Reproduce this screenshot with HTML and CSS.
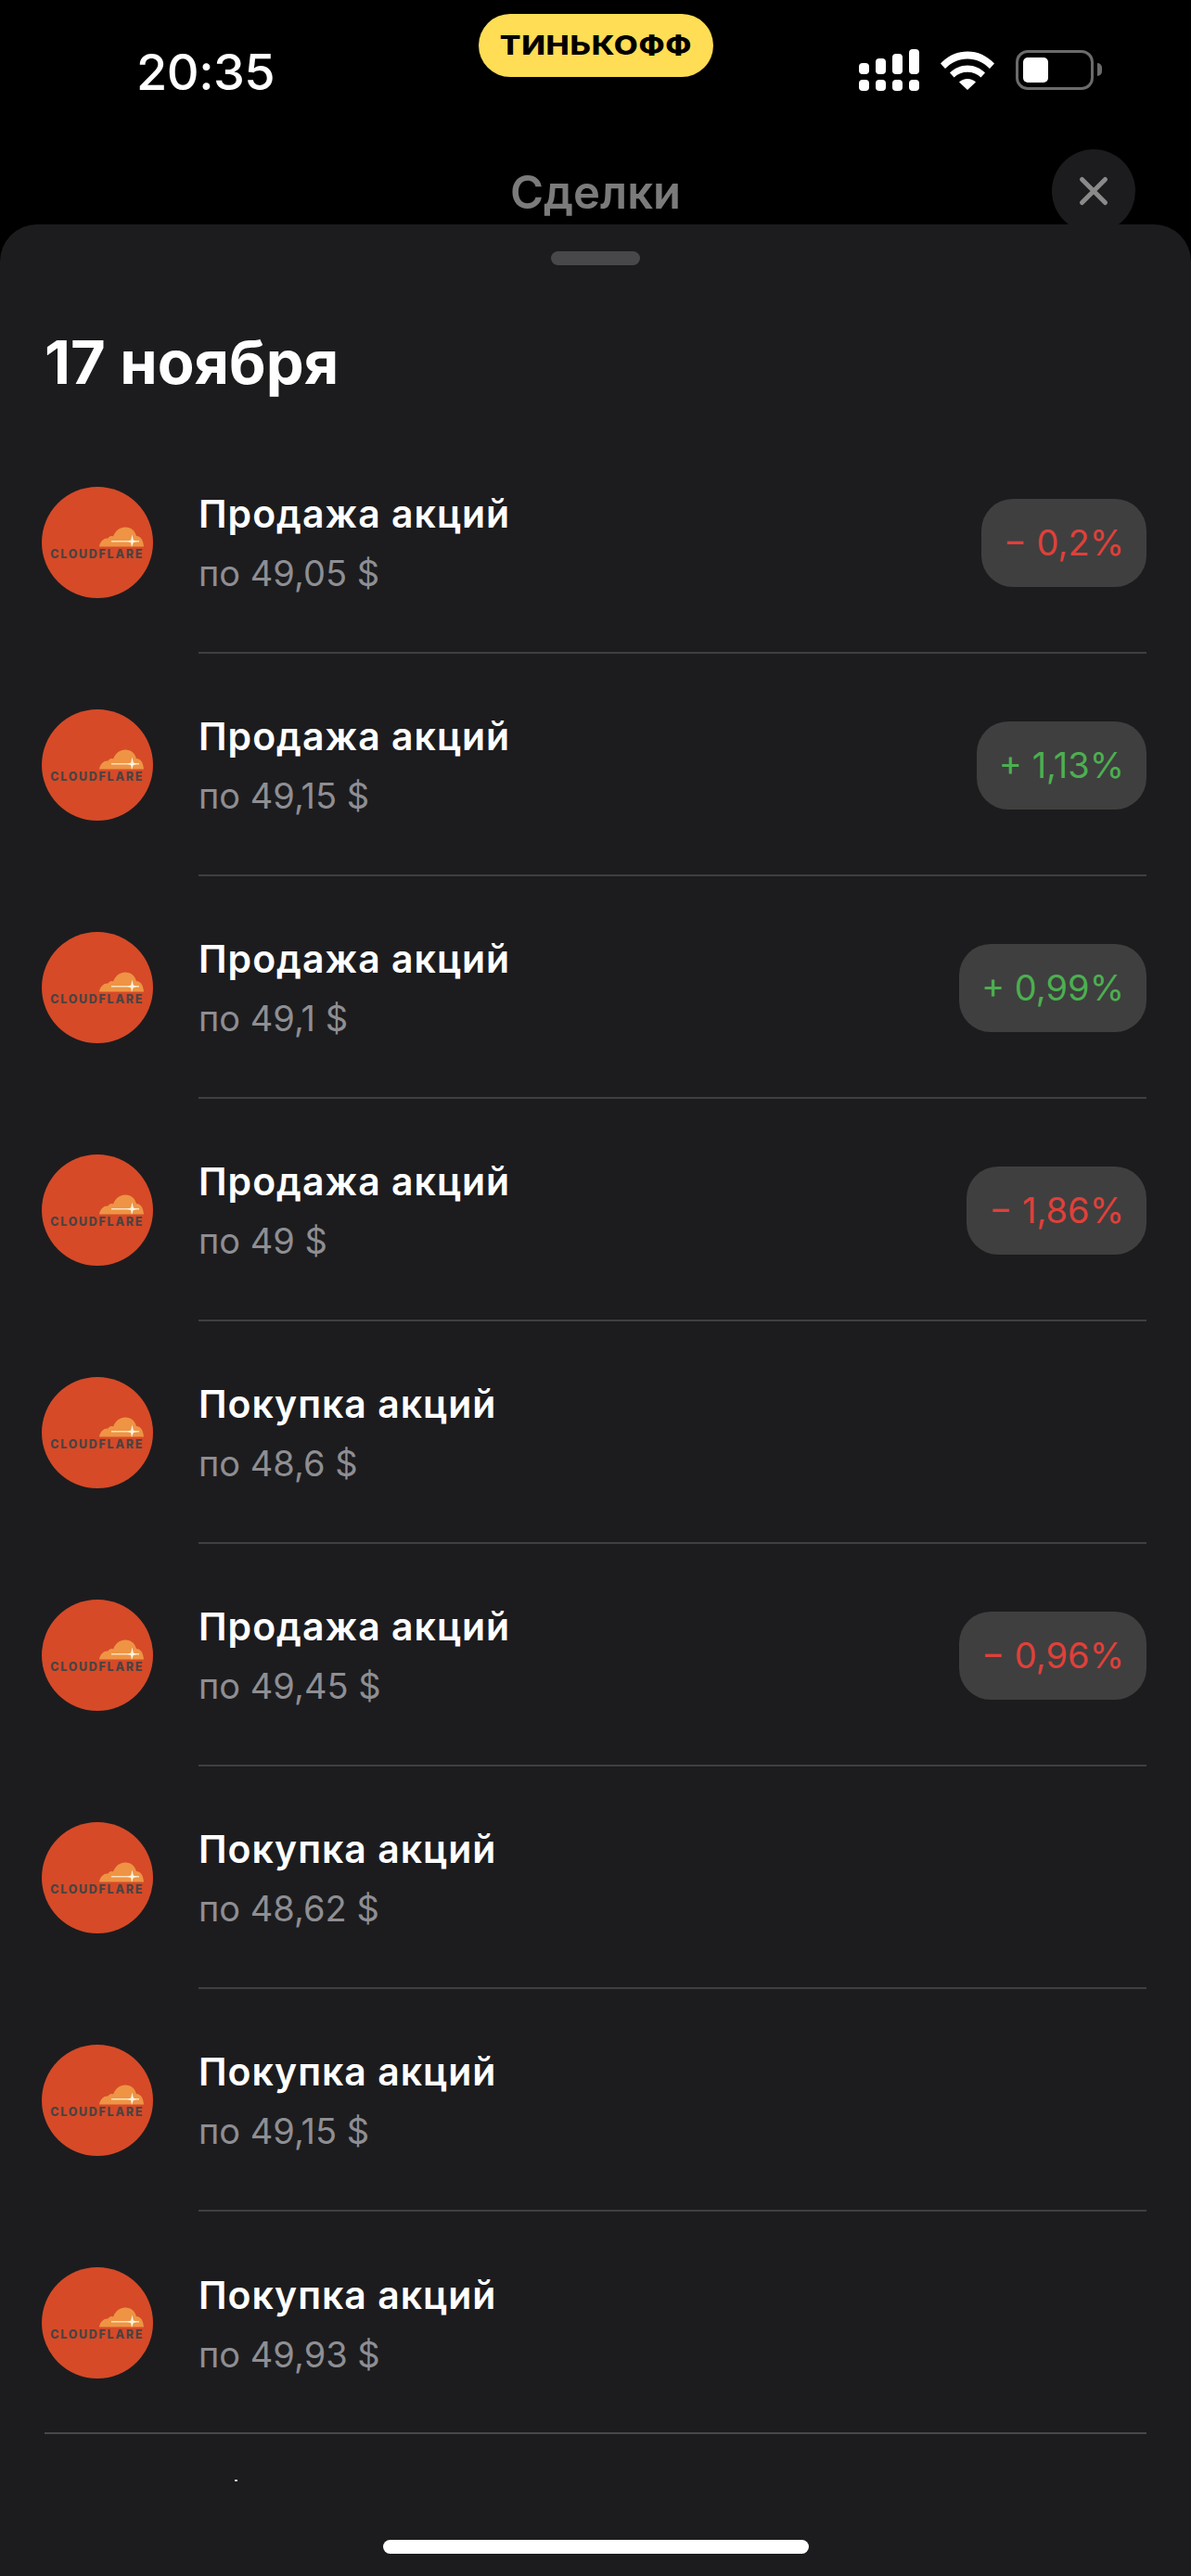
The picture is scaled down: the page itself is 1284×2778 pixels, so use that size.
FILE: index.html
```html
<!DOCTYPE html>
<html lang="ru">
<head>
<meta charset="utf-8">
<title>Сделки</title>
<link rel="stylesheet" href="styles.css">
</head>
<body>
<svg class="defs" width="0" height="0" aria-hidden="true">
  <symbol id="cloud" viewBox="0 0 48 22">
    <path d="M0 21.500C1 15.500 5 12 9.500 12.500C10.500 10.500 13 9.500 15 10.500C17.500 4 22.500 0.500 28 0.500C34.500 0.500 38.500 4.500 40 10C45 10 47.500 15 48 21.500Z" fill="#ee9444"/>
    <path d="M13 15.800H43" stroke="#fff3df" stroke-width="1.200"/>
    <path d="M35.500 8.500L36.800 14.500L41 15.800L36.800 17.100L35 22L34 17.100L30 15.800L34.200 14.500Z" fill="#fff3df"/>
  </symbol>
</svg>
<div class="phone">
  <header class="top">
    <div class="status">
      <div class="time">20:35</div>
      <div class="brand"><span class="brand-name">ТИНЬКОФФ</span></div>
      <div class="indicators">
        <svg class="signal" width="65" height="46" viewBox="0 0 65 46" fill="#fff">
          <rect x="0" y="15" width="11" height="12" rx="4"/><rect x="18" y="10" width="11" height="17" rx="4"/><rect x="36" y="5" width="11" height="22" rx="4"/><rect x="54" y="0" width="11" height="27" rx="4"/>
          <rect x="0" y="33" width="11" height="12" rx="4"/><rect x="18" y="33" width="11" height="12" rx="4"/><rect x="36" y="33" width="11" height="12" rx="4"/><rect x="54" y="33" width="11" height="12" rx="4"/>
        </svg>
        <svg class="wifi" width="58" height="44" viewBox="0 0 58 44" fill="#fff">
          <path d="M0 14.500C8 6 18 1.500 29 1.500C40 1.500 50 6 58 14.500L53 20C46.500 13.500 38 9.500 29 9.500C20 9.500 11.500 13.500 5 20Z"/>
          <path d="M10 24.500C15 19.500 21.500 16.500 29 16.500C36.500 16.500 43 19.500 48 24.500L43.500 29.500C39.500 25.800 34.500 23.800 29 23.800C23.500 23.800 18.500 25.800 14.500 29.500Z"/>
          <path d="M20 34.500C22.500 32.200 25.500 31 29 31C32.500 31 35.500 32.200 38 34.500L29 43Z"/>
        </svg>
        <div class="battery"><div class="battery-fill"></div></div>
        <div class="battery-nub"></div>
      </div>
    </div>
    <h1 class="screen-title">Сделки</h1>
    <button class="close" type="button" aria-label="Закрыть">
      <svg width="34" height="34" viewBox="0 0 34 34"><path d="M4.500 4.500L29.500 29.500M29.500 4.500L4.500 29.500" stroke="#8a8a8a" stroke-width="5" stroke-linecap="round"/></svg>
    </button>
  </header>

  <main class="sheet">
    <div class="handle"></div>
    <h2 class="date">17 ноября</h2>
    <ul class="deals">
      <li class="deal">
        <div class="logo"><svg class="logo-cloud" width="48" height="22"><use href="#cloud"/></svg><span class="logo-name">CLOUDFLARE</span></div>
        <div class="deal-body">
          <div class="deal-info"><div class="deal-title">Продажа акций</div><div class="deal-price">по 49,05 $</div></div>
          <div class="pnl pnl-loss">− 0,2%</div>
        </div>
      </li>
      <li class="deal">
        <div class="logo"><svg class="logo-cloud" width="48" height="22"><use href="#cloud"/></svg><span class="logo-name">CLOUDFLARE</span></div>
        <div class="deal-body">
          <div class="deal-info"><div class="deal-title">Продажа акций</div><div class="deal-price">по 49,15 $</div></div>
          <div class="pnl pnl-gain">+ 1,13%</div>
        </div>
      </li>
      <li class="deal">
        <div class="logo"><svg class="logo-cloud" width="48" height="22"><use href="#cloud"/></svg><span class="logo-name">CLOUDFLARE</span></div>
        <div class="deal-body">
          <div class="deal-info"><div class="deal-title">Продажа акций</div><div class="deal-price">по 49,1 $</div></div>
          <div class="pnl pnl-gain">+ 0,99%</div>
        </div>
      </li>
      <li class="deal">
        <div class="logo"><svg class="logo-cloud" width="48" height="22"><use href="#cloud"/></svg><span class="logo-name">CLOUDFLARE</span></div>
        <div class="deal-body">
          <div class="deal-info"><div class="deal-title">Продажа акций</div><div class="deal-price">по 49 $</div></div>
          <div class="pnl pnl-loss">− 1,86%</div>
        </div>
      </li>
      <li class="deal">
        <div class="logo"><svg class="logo-cloud" width="48" height="22"><use href="#cloud"/></svg><span class="logo-name">CLOUDFLARE</span></div>
        <div class="deal-body">
          <div class="deal-info"><div class="deal-title">Покупка акций</div><div class="deal-price">по 48,6 $</div></div>
        </div>
      </li>
      <li class="deal">
        <div class="logo"><svg class="logo-cloud" width="48" height="22"><use href="#cloud"/></svg><span class="logo-name">CLOUDFLARE</span></div>
        <div class="deal-body">
          <div class="deal-info"><div class="deal-title">Продажа акций</div><div class="deal-price">по 49,45 $</div></div>
          <div class="pnl pnl-loss">− 0,96%</div>
        </div>
      </li>
      <li class="deal">
        <div class="logo"><svg class="logo-cloud" width="48" height="22"><use href="#cloud"/></svg><span class="logo-name">CLOUDFLARE</span></div>
        <div class="deal-body">
          <div class="deal-info"><div class="deal-title">Покупка акций</div><div class="deal-price">по 48,62 $</div></div>
        </div>
      </li>
      <li class="deal">
        <div class="logo"><svg class="logo-cloud" width="48" height="22"><use href="#cloud"/></svg><span class="logo-name">CLOUDFLARE</span></div>
        <div class="deal-body">
          <div class="deal-info"><div class="deal-title">Покупка акций</div><div class="deal-price">по 49,15 $</div></div>
        </div>
      </li>
      <li class="deal">
        <div class="logo"><svg class="logo-cloud" width="48" height="22"><use href="#cloud"/></svg><span class="logo-name">CLOUDFLARE</span></div>
        <div class="deal-body">
          <div class="deal-info"><div class="deal-title">Покупка акций</div><div class="deal-price">по 49,93 $</div></div>
        </div>
      </li>
    </ul>
    <div class="total-rule"></div>
    <div class="speck"></div>
    <div class="home-indicator"></div>
  </main>
</div>
</body>
</html>
```
FILE: styles.css
```css
* { box-sizing: border-box; }
html, body { margin: 0; padding: 0; background: #000; }
body { font-family: Inter, "Noto Sans", sans-serif; color: #fff; }
.defs { position: absolute; }
.phone { width: 1284px; height: 2778px; overflow: hidden; display: flex; flex-direction: column; }

.top { position: relative; height: 242px; flex: none; }
.status { display: grid; grid-template-columns: 1fr 253px 1fr; align-items: start; padding-top: 15px; }
.time { padding: 32px 0 0 147px; font-size: 54px; line-height: 62px; font-weight: 500; letter-spacing: -0.5px; }
.brand { height: 68px; border-radius: 34px; background: #ffdd55; color: #000; display: flex; align-items: center; justify-content: center; }
.brand-name { display: block; font-size: 28px; line-height: 34px; font-weight: 800; letter-spacing: 0.6px; transform: scaleX(1.2); }
.indicators { display: flex; align-items: flex-start; padding: 38px 0 0 157px; }
.signal { flex: none; }
.wifi { flex: none; margin: 1px 0 0 23px; }
.battery { flex: none; width: 84px; height: 43px; margin: 1px 0 0 23px; padding: 5px; border: 3px solid #6b6b6b; border-radius: 13px; }
.battery-fill { width: 27px; height: 100%; background: #fff; border-radius: 5px; }
.battery-nub { flex: none; width: 5px; height: 14px; margin: 15px 0 0 4px; background: #6b6b6b; border-radius: 0 7px 7px 0; }
.screen-title { margin: 69px 0 0; text-align: center; font-size: 49px; line-height: 60px; font-weight: 600; color: #7b7b7b; }
.close { position: absolute; left: 1134px; top: 161px; width: 90px; height: 90px; padding: 0; border: 0; border-radius: 50%; background: #1c1c1e; display: flex; align-items: center; justify-content: center; }

.sheet { position: relative; flex: 1; background: #1c1c1e; border-radius: 40px 40px 0 0; }
.handle { width: 96px; height: 15px; margin: 29px auto 0; border-radius: 8px; background: #48484a; }
.date { margin: 57px 0 0 48px; font-size: 65px; line-height: 96px; font-weight: 700; }

.deals { list-style: none; margin: 26px 0 0; padding: 0; }
.deal { display: flex; height: 240px; padding: 0 48px 0 45px; align-items: stretch; }
.logo { flex: none; width: 120px; height: 120px; margin-top: 60px; border-radius: 50%; background: #d64a28; display: flex; flex-direction: column; align-items: flex-end; padding: 43px 10px 0 0; }
.logo-cloud { display: block; flex: none; }
.logo-name { margin-top: 1px; font-size: 12.500px; line-height: 14px; font-weight: 800; letter-spacing: 1.700px; color: #4a4340; white-space: nowrap; }

.deal-body { flex: 1; margin-left: 49px; display: flex; align-items: center; justify-content: space-between; border-bottom: 2px solid #3f3f41; }
.deal:last-child .deal-body { border-bottom: 0; }
.deal-info { margin-top: 3px; }
.deal-title { font-size: 41px; line-height: 64px; font-weight: 600; letter-spacing: 1px; }
.deal-price { font-size: 38px; line-height: 64px; color: #8e8e93; }
.pnl { height: 95px; margin-top: 2px; padding: 0 24px; border-radius: 34px; background: #3f3f3f; display: flex; align-items: center; font-size: 38px; }
.pnl-loss { color: #e0403a; }
.pnl-gain { color: #4caf50; }

.total-rule { height: 2px; margin: -2px 48px 0; background: #48484a; }
.speck { position: absolute; left: 253px; top: 2432px; width: 3px; height: 2px; background: #cfcfcf; }
.home-indicator { position: absolute; left: 413px; top: 2497px; width: 459px; height: 15px; border-radius: 8px; background: #fff; }
```
